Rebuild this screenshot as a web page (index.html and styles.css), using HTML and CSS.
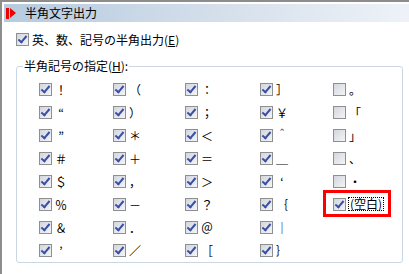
FILE: index.html
```html
<!DOCTYPE html>
<html>
<head lang="ja">
    <meta charset="UTF-8">
    <title>半角文字出力</title>
    <link rel="stylesheet" href="styles.css">
</head>
<body>
    <div class="pane">
        <div class="title"><span class="mark"></span>半角文字出力</div>
        <div class="opt main"><span class="cb on"></span>英、数、記号の半角出力(<u>E</u>)</div>
        <fieldset class="group">
            <legend>半角記号の指定(<u>H</u>):</legend>
            <div class="grid">
                <div class="opt"><span class="cb on"></span><span class="ch">！</span></div>
                <div class="opt"><span class="cb on"></span><span class="ch">“</span></div>
                <div class="opt"><span class="cb on"></span><span class="ch">”</span></div>
                <div class="opt"><span class="cb on"></span><span class="ch">＃</span></div>
                <div class="opt"><span class="cb on"></span><span class="ch">＄</span></div>
                <div class="opt"><span class="cb on"></span><span class="ch">％</span></div>
                <div class="opt"><span class="cb on"></span><span class="ch">＆</span></div>
                <div class="opt"><span class="cb on"></span><span class="ch">’</span></div>

                <div class="opt"><span class="cb on"></span><span class="ch">（</span></div>
                <div class="opt"><span class="cb on"></span><span class="ch">）</span></div>
                <div class="opt"><span class="cb on"></span><span class="ch">＊</span></div>
                <div class="opt"><span class="cb on"></span><span class="ch">＋</span></div>
                <div class="opt"><span class="cb on"></span><span class="ch">，</span></div>
                <div class="opt"><span class="cb on"></span><span class="ch">－</span></div>
                <div class="opt"><span class="cb on"></span><span class="ch">．</span></div>
                <div class="opt"><span class="cb on"></span><span class="ch">／</span></div>

                <div class="opt"><span class="cb on"></span><span class="ch">：</span></div>
                <div class="opt"><span class="cb on"></span><span class="ch">；</span></div>
                <div class="opt"><span class="cb on"></span><span class="ch">＜</span></div>
                <div class="opt"><span class="cb on"></span><span class="ch">＝</span></div>
                <div class="opt"><span class="cb on"></span><span class="ch">＞</span></div>
                <div class="opt"><span class="cb on"></span><span class="ch">？</span></div>
                <div class="opt"><span class="cb on"></span><span class="ch">＠</span></div>
                <div class="opt"><span class="cb on"></span><span class="ch">［</span></div>

                <div class="opt"><span class="cb on"></span><span class="ch">］</span></div>
                <div class="opt"><span class="cb on"></span><span class="ch">￥</span></div>
                <div class="opt"><span class="cb on"></span><span class="ch">＾</span></div>
                <div class="opt"><span class="cb on"></span><span class="ch">＿</span></div>
                <div class="opt"><span class="cb on"></span><span class="ch">‘</span></div>
                <div class="opt"><span class="cb on"></span><span class="ch">｛</span></div>
                <div class="opt"><span class="cb on"></span><span class="ch">｜</span></div>
                <div class="opt"><span class="cb on"></span><span class="ch">｝</span></div>

                <div class="opt"><span class="cb"></span><span class="ch">。</span></div>
                <div class="opt"><span class="cb"></span><span class="ch">「</span></div>
                <div class="opt"><span class="cb"></span><span class="ch">」</span></div>
                <div class="opt"><span class="cb"></span><span class="ch">、</span></div>
                <div class="opt"><span class="cb"></span><span class="ch">・</span></div>
                <div class="opt hl"><span class="cb on"></span><span class="focus">(空白)</span></div>
            </div>
        </fieldset>
    </div>
</body>
</html>
```
FILE: styles.css
```css
*{
    margin: 0px;
    padding: 0px;
}
body{
    background: #fff;
    font-family: "Noto Sans CJK JP", "DejaVu Sans", sans-serif;
    font-size: 12px;
    color: #000;
}
.pane{
    width: 407px;
    height: 272px;
    border-top: 2px solid #8d8d8d;
    border-left: 2px solid #8d8d8d;
}
.title{
    margin: 2px 0 0 2px;
    height: 18px;
    line-height: 18px;
    display: flex;
    align-items: center;
    background: linear-gradient(to right, #b6cadf, #d3deea 50%, #eef2f8);
}
.mark{
    width: 9px;
    height: 11px;
    margin: 0 10px 0 2px;
    background:
        linear-gradient(#e00, #e00) 0 0 / 3px 11px no-repeat,
        conic-gradient(from -90deg at 0 50%, transparent 0) ;
    position: relative;
}
.mark::after{
    content: "";
    position: absolute;
    left: 4px;
    top: 0px;
    border-left: 6px solid #e00;
    border-top: 5.5px solid transparent;
    border-bottom: 5.5px solid transparent;
}
.opt{
    display: flex;
    align-items: center;
    height: 14px;
    white-space: nowrap;
}
.main{
    margin: 10px 0 0 14px;
}
.cb{
    flex: none;
    width: 11px;
    height: 11px;
    border: 1px solid #8e8f8f;
    background: linear-gradient(135deg, #d3d6de, #f4f4f4);
    margin-right: 3px;
    position: relative;
}
.cb.on::after{
    content: "";
    position: absolute;
    left: 3px;
    top: 0px;
    width: 3px;
    height: 7px;
    border-right: 2px solid #3a4fa6;
    border-bottom: 2px solid #3a4fa6;
    transform: rotate(40deg);
}
.group{
    margin: 14px 0 0 14px;
    width: 385px;
    height: 201px;
    border: 1px solid #cad6e2;
    border-radius: 3px;
}
.group legend{
    margin-left: 6px;
    padding: 0 1px;
    line-height: 12px;
}
.grid{
    display: grid;
    grid-auto-flow: column;
    grid-template-rows: repeat(8, 23px);
    grid-template-columns: 74px 72px 75px 73px auto;
    margin: 10px 0 0 22px;
}
.ch{
    width: 12px;
    text-align: center;
}
.focus{
    border: 1px dotted #000;
    line-height: 12px;
    padding: 0 1px;
    margin-left: -1px;
}
.hl{
    position: relative;
}
.hl::before{
    content: "";
    position: absolute;
    left: -10px;
    top: -7px;
    width: 62px;
    height: 21px;
    border: 3px solid #f00;
}
```
